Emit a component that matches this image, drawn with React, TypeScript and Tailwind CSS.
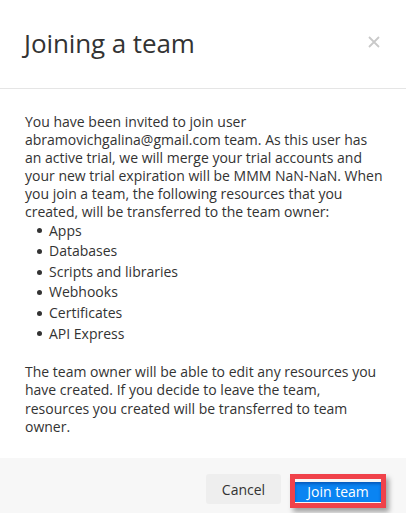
const resources = [
  'Apps',
  'Databases',
  'Scripts and libraries',
  'Webhooks',
  'Certificates',
  'API Express'
];

const App = () => {
  return (
    <div className="w-[406px] h-[513px] overflow-hidden bg-white text-[#333] font-['Open_Sans',sans-serif]">
      <div className="h-[89px] flex items-center justify-between px-6 border-b border-[#e5e5e5]">
        <h1 className="text-[26px] leading-none tracking-[-0.1px] pb-[2px]">Joining a team</h1>
        <button className="w-[14px] h-[14px] mr-[1px] mb-[4px] flex items-center justify-center">
          <svg width="12" height="12" viewBox="0 0 12 12">
            <path d="M1 1L11 11M11 1L1 11" stroke="#c9c9c9" strokeWidth="1.8" />
          </svg>
        </button>
      </div>

      <div className="pl-6 pr-[18px] pt-[24px] pb-[22px] text-[14px]">
        <p className="leading-[18.1px] pl-[1px] whitespace-nowrap">
          You have been invited to join user
          <br />
          abramovichgalina@gmail.com team. As this user has
          <br />
          an active trial, we will merge your trial accounts and
          <br />
          your new trial expiration will be MMM NaN-NaN. When
          <br />
          you join a team, the following resources that you
          <br />
          created, will be transferred to the team owner:
        </p>
        <ul className="pl-[13px] -mt-[1px]">
          {resources.map((item, i) => (
            <li key={`res-${i}`} className="flex items-center leading-[20.6px]">
              <span className="w-[5px] h-[5px] rounded-full bg-[#333] mr-[7px]" />
              {item}
            </li>
          ))}
        </ul>
        <p className="leading-[18.3px] pl-[1px] pr-[6px] mt-[19px]">
          The team owner will be able to edit any resources you have created. If you decide to
          leave the team, resources you created will be transferred to team owner.
        </p>
      </div>

      <div className="bg-[#f7f7f7] h-[60px] flex justify-end items-start pt-[16px] pr-[20px] gap-[9px]">
        <button className="w-[75px] h-[30px] rounded-[3px] bg-[#eeeeee] text-[14px] text-[#333]">
          Cancel
        </button>
        <div className="border-[5px] border-[#f0424a] shadow-[3px_4px_5px_rgba(0,0,0,0.35)]">
          <button className="w-[86px] h-[20px] bg-[#0a84f2] text-white text-[14px] leading-[20px] shadow-[inset_0_2px_3px_rgba(0,40,120,0.45)]">
            Join team
          </button>
        </div>
      </div>
    </div>
  );
};

export default App;
